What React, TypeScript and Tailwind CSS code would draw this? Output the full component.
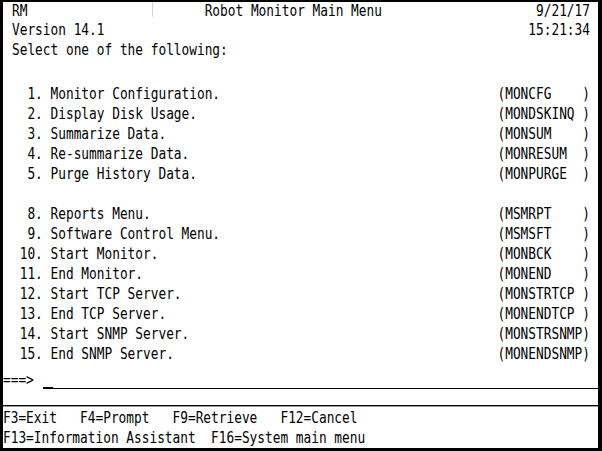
import React from 'react';

const pad = (s: string, n: number) => s + ' '.repeat(Math.max(0, n - s.length));

export default function App() {
  const head = [
    pad(pad('RM', 25) + 'Robot Monitor Main Menu', 68) + '9/21/17',
    pad('Version 14.1', 67) + '15:21:34',
    'Select one of the following:',
  ];

  const groupA = [
    ['  1. Monitor Configuration.', '(MONCFG    )'],
    ['  2. Display Disk Usage.', '(MONDSKINQ )'],
    ['  3. Summarize Data.', '(MONSUM    )'],
    ['  4. Re-summarize Data.', '(MONRESUM  )'],
    ['  5. Purge History Data.', '(MONPURGE  )'],
  ];

  const groupB = [
    ['  8. Reports Menu.', '(MSMRPT    )'],
    ['  9. Software Control Menu.', '(MSMSFT    )'],
    [' 10. Start Monitor.', '(MONBCK    )'],
    [' 11. End Monitor.', '(MONEND    )'],
    [' 12. Start TCP Server.', '(MONSTRTCP )'],
    [' 13. End TCP Server.', '(MONENDTCP )'],
    [' 14. Start SNMP Server.', '(MONSTRSNMP)'],
    [' 15. End SNMP Server.', '(MONENDSNMP)'],
  ];

  const term = "font-['DejaVu_Sans_Mono',monospace] text-[16px] text-black whitespace-pre scale-x-80 origin-left";

  const Row = ({ text }: { text: string }) => (
    <div className={`h-[20px] leading-[20px] ${term}`}>{text}</div>
  );

  return (
    <div className="w-[602px] h-[451px] bg-white border-black border-t-2 border-l-[3px] border-r-[4px] border-b-[3px] flex flex-col overflow-hidden">
      {/* Header */}
      <div className="pl-[9px] relative shrink-0">
        <div className="absolute left-[149px] top-0 w-px h-[15px] bg-gray-300" />
        <div className={`h-[18px] leading-[17px] ${term}`}>{head[0]}</div>
        <Row text={head[1]} />
        <Row text={head[2]} />
      </div>

      {/* Options */}
      <div className="pl-[9px] pt-[24px] shrink-0">
        {groupA.map(([l, r]) => (
          <Row key={l} text={pad(l, 63) + r} />
        ))}
        <div className="h-[20px]" />
        {groupB.map(([l, r]) => (
          <Row key={l} text={pad(l, 63) + r} />
        ))}
      </div>

      {/* Command line */}
      <div className="mt-[6px] relative h-[20px] shrink-0">
        <div className={`h-[20px] leading-[20px] ${term}`}>{'===>'}</div>
        <div className="absolute left-[40px] right-0 top-[18px] h-px bg-black" />
        <div className="absolute left-[40px] w-[10px] top-[17px] h-[2px] bg-black" />
      </div>

      <div className="mt-[15px] h-px bg-black shrink-0" />
      <div className="h-px bg-gray-400 shrink-0" />

      {/* Function keys */}
      <div className="pt-[1px] shrink-0">
        <Row text="F3=Exit   F4=Prompt   F9=Retrieve   F12=Cancel" />
        <Row text="F13=Information Assistant  F16=System main menu" />
      </div>
    </div>
  );
}
